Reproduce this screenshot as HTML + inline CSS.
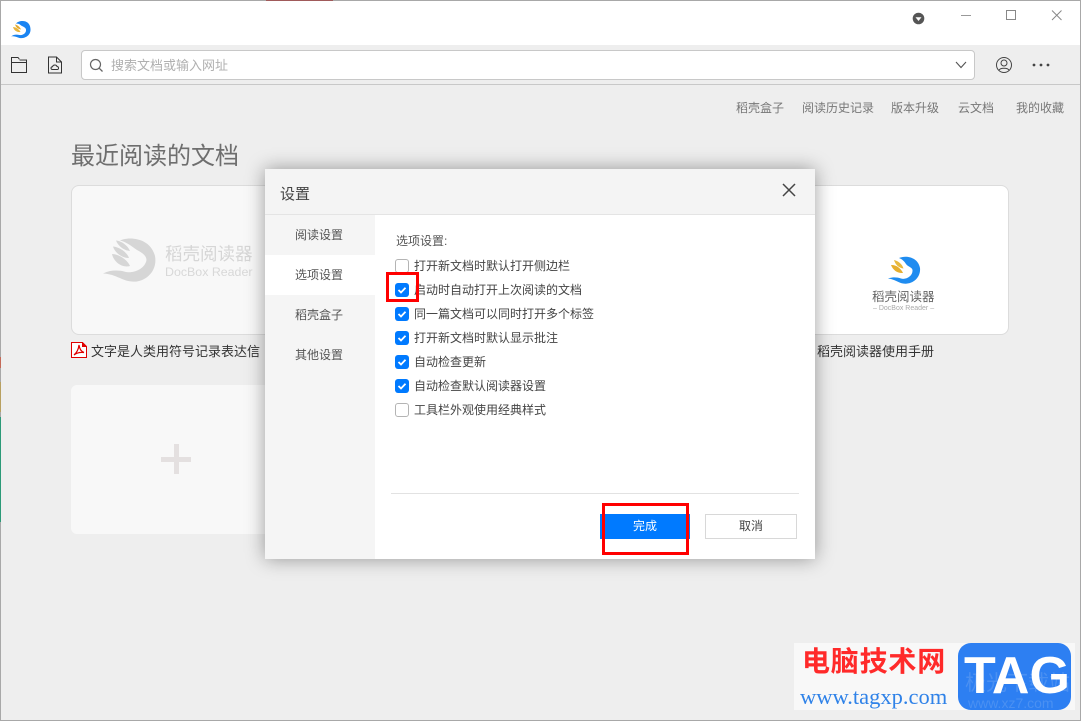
<!DOCTYPE html>
<html lang="zh">
<head>
<meta charset="utf-8">
<title>稻壳阅读器</title>
<style>
*{box-sizing:border-box;margin:0;padding:0}
html,body{width:1081px;height:721px;overflow:hidden;background:#eee}
body{position:relative;font-family:"Liberation Sans","Noto Sans CJK SC",sans-serif;color:#444}
.a{position:absolute}
.t{position:absolute;white-space:nowrap;line-height:16px}
.cb{position:absolute;left:395px;width:14px;height:14px;border-radius:3px;background:#007aff}
.cb svg{position:absolute;left:0;top:0}
.cb.off{background:#fff;border:1px solid #b4b4b4}
.opt{left:414px;font-size:12px;color:#444}
.nav{left:295px;font-size:12px;color:#555}
.top{top:100px;font-size:12px;color:#777}
</style>
</head>
<body>
<!-- window chrome -->
<div class="a" style="left:0;top:0;width:1081px;height:45px;background:#fff"></div>
<div class="a" style="left:0;top:45px;width:1081px;height:39px;background:#eee"></div>
<div class="a" style="left:0;top:84px;width:1081px;height:1px;background:#c8c8c8"></div>
<div class="a" style="left:0;top:0;width:1081px;height:1px;background:#a8a8a8"></div>
<div class="a" style="left:266px;top:0;width:67px;height:1px;background:#a05a5a"></div>
<div class="a" style="left:0;top:0;width:1px;height:721px;background:#a8a8a8"></div>
<div class="a" style="left:1080px;top:0;width:1px;height:721px;background:#a8a8a8"></div>
<div class="a" style="left:0;top:720px;width:1081px;height:1px;background:#a8a8a8"></div>
<div class="a" style="left:0;top:357px;width:1px;height:11px;background:#c46a58"></div>
<div class="a" style="left:0;top:382px;width:1px;height:30px;background:#b8a060"></div>
<div class="a" style="left:0;top:417px;width:1px;height:105px;background:#2c9a78"></div>

<!-- app logo -->
<svg class="a" style="left:10px;top:19px" width="22" height="22" viewBox="0 0 22 22">
<path d="M6 4.500C9 1 20 0 20.500 10C21 18 12 20.500 8 18.500C5.500 17.500 3 17 1 17.500C4 15 7 15.500 9.500 16C13 16.500 16.500 14 16 10.500C15.700 8 12 7.500 10.500 6C9.500 5 8 4.500 6 4.500Z" fill="#1a84f2"/>
<path d="M3 8C5.500 8 9 10 10.500 13C7 13.500 4 11.500 3 8Z" fill="#e8b53c"/>
<path d="M5 5.500C7.500 6 10 8 11 10.500C8 10 6 8.500 5 5.500Z" fill="#e2a92e"/>
</svg>

<!-- window controls -->
<svg class="a" style="left:910px;top:10px" width="171" height="20" viewBox="0 0 171 20">
<circle cx="8.500" cy="8.500" r="5.800" fill="#555"/>
<path d="M5.500 7.200H11.500L8.500 11Z" fill="#fff"/>
<path d="M51 5.500H61" stroke="#999" stroke-width="1" fill="none"/>
<rect x="96.500" y="0.500" width="9" height="9" stroke="#888" fill="none"/>
<path d="M142 0.500L151.500 10M151.500 0.500L142 10" stroke="#888" stroke-width="1" fill="none"/>
</svg>

<!-- toolbar icons -->
<svg class="a" style="left:10px;top:56px" width="20" height="18" viewBox="0 0 20 18">
<path d="M1.500 16.500V1.500H8L10 4H16.500V16.500Z" fill="none" stroke="#333" stroke-width="1"/>
<path d="M1.500 6.500H16.500" stroke="#333" stroke-width="1" fill="none"/>
<path d="M9 3.500H16.500" stroke="#999" stroke-width="1" fill="none"/>
</svg>
<svg class="a" style="left:47px;top:56px" width="18" height="18" viewBox="0 0 18 18">
<path d="M1.500 1H9.500L14.500 6V17H1.500Z" fill="none" stroke="#333" stroke-width="1"/>
<path d="M9.500 1V6H14.500" fill="none" stroke="#333" stroke-width="1"/>
<path d="M5.500 13.500C3.500 13.500 3.500 10.800 5.500 10.800C6 8.500 9.500 8.500 10 10.500C12 10.500 12 13.500 10.300 13.500Z" fill="none" stroke="#333" stroke-width="1"/>
</svg>

<!-- search -->
<div class="a" style="left:81px;top:50px;width:894px;height:30px;background:#fff;border:1px solid #c8c8c8;border-radius:4px"></div>
<svg class="a" style="left:89px;top:58px" width="16" height="16" viewBox="0 0 16 16">
<circle cx="6.500" cy="6.500" r="5" fill="none" stroke="#666" stroke-width="1.200"/>
<path d="M10.200 10.200L13.500 13.500" stroke="#666" stroke-width="1.300" fill="none"/>
</svg>
<div class="t" style="left:111px;top:58px;font-size:13px;color:#b0b0b0">搜索文档或输入网址</div>
<svg class="a" style="left:955px;top:60px" width="12" height="10" viewBox="0 0 12 10">
<path d="M1 2L6 7.500L11 2" fill="none" stroke="#555" stroke-width="1.100"/>
</svg>
<svg class="a" style="left:995px;top:56px" width="18" height="18" viewBox="0 0 18 18">
<circle cx="9" cy="9" r="7.500" fill="none" stroke="#444" stroke-width="1"/>
<circle cx="9" cy="7" r="3" fill="none" stroke="#444" stroke-width="1"/>
<path d="M3.800 14.500C5 11.500 13 11.500 14.200 14.500" fill="none" stroke="#444" stroke-width="1"/>
</svg>
<svg class="a" style="left:1031px;top:62px" width="20" height="6" viewBox="0 0 20 6">
<circle cx="3" cy="3" r="1.400" fill="#444"/><circle cx="10" cy="3" r="1.400" fill="#444"/><circle cx="17" cy="3" r="1.400" fill="#444"/>
</svg>

<!-- top links -->
<div class="t top" style="left:736px">稻壳盒子</div>
<div class="t top" style="left:802px">阅读历史记录</div>
<div class="t top" style="left:891px">版本升级</div>
<div class="t top" style="left:958px">云文档</div>
<div class="t top" style="left:1016px">我的收藏</div>

<div class="t" style="left:71px;top:142px;font-size:24px;line-height:30px;color:#6e6e6e">最近阅读的文档</div>

<!-- card 1 -->
<div class="a" style="left:71px;top:185px;width:300px;height:150px;background:#f8f8f8;border:1px solid #dcdcdc;border-radius:8px"></div>
<svg class="a" style="left:100px;top:236px" width="60" height="48" viewBox="100 236 60 48">
<path d="M120 240.500C128 236.500 150 237 155 256C158 272 144 283 132 281.500C122 281 116 274 103 273.500C110 270 118 270 124 271.500C132 274 143 270 146 262C148 257 143 253 137 250C132 247 127 242 120 240.500Z" fill="#d6d6d6"/>
<path d="M112 254C118 254 127 259 130 266C123 268 114 263 112 254Z" fill="#d6d6d6"/>
<path d="M113 246.500C119 247 127 252 129 258C122 258 115 253 113 246.500Z" fill="#d6d6d6"/>
<path d="M116 240.500C122 241 128 246 130 251C124 250.500 118 246 116 240.500Z" fill="#d6d6d6"/>
</svg>
<div class="t" style="left:165px;top:244px;font-size:17.500px;line-height:20px;color:#d6d6d6">稻壳阅读器</div>
<div class="t" style="left:165px;top:265px;font-size:12.400px;line-height:14px;color:#d8d8d8">DocBox Reader</div>

<!-- card 2 (behind dialog, right part) -->
<div class="a" style="left:709px;top:185px;width:300px;height:150px;background:#fff;border:1px solid #dcdcdc;border-radius:8px"></div>
<svg class="a" style="left:886px;top:255px" width="36" height="32" viewBox="0 0 36 32">
<path d="M13 3C20 0 32 2 34 13C35 23 26 30 17 28.500C12 27.500 8 24 2 23.500C6 22 11 22 15 23.500C20 25 27 21 26.500 15C26 12 22 12 20 9C18.500 6.500 16 4 13 3Z" fill="#1f8cf0"/>
<path d="M5 10C9.500 9.500 15 13 17 18C12 18.500 7 15.500 5 10Z" fill="#e6ae2e"/>
<path d="M8 5C12.500 6 16 9 17.500 13.500C13 13 9.500 10 8 5Z" fill="#e8b93e"/>
</svg>
<div class="t" style="left:872px;top:289px;font-size:12.500px;color:#666">稻壳阅读器</div>
<div class="t" style="left:873px;top:304px;font-size:7px;line-height:9px;color:#aaa">– DocBox Reader –</div>

<!-- captions -->
<svg class="a" style="left:71px;top:342px" width="17" height="16" viewBox="0 0 17 16">
<path d="M0.500 0.500H11.500L15.500 4.500V15.500H0.500Z" fill="#fff" stroke="#e00000" stroke-width="1"/>
<path d="M11.500 0.500V4.500H15.500" fill="#e00000" stroke="#e00000" stroke-width="1"/>
<path d="M8 3C7.500 7 6 10.500 3 13C6 10.500 9 10 13 10.500C10 9.500 8.500 6.500 8 3Z" fill="none" stroke="#e00000" stroke-width="1.200"/>
</svg>
<div class="t" style="left:91px;top:344px;font-size:13px;color:#333">文字是人类用符号记录表达信</div>
<div class="t" style="left:817px;top:344px;font-size:13px;color:#333">稻壳阅读器使用手册</div>

<!-- add card -->
<div class="a" style="left:71px;top:385px;width:300px;height:149px;background:#f8f8f8;border-radius:6px"></div>
<div class="a" style="left:161px;top:457px;width:30px;height:5px;background:#e4e0e0"></div>
<div class="a" style="left:174px;top:444px;width:5px;height:30px;background:#e4e0e0"></div>

<!-- dialog -->
<div class="a" style="left:265px;top:169px;width:550px;height:390px;background:#fff;box-shadow:0 0 18px rgba(0,0,0,.38)"></div>
<div class="a" style="left:265px;top:169px;width:550px;height:46px;background:#f4f4f4;border-bottom:1px solid #e4e4e4"></div>
<div class="t" style="left:280px;top:186px;font-size:15px;line-height:18px;color:#444">设置</div>
<svg class="a" style="left:782px;top:183px" width="14" height="14" viewBox="0 0 14 14">
<path d="M1 1L13 13M13 1L1 13" stroke="#444" stroke-width="1.500" fill="none"/>
</svg>
<div class="a" style="left:265px;top:215px;width:110px;height:344px;background:#f5f5f5"></div>
<div class="a" style="left:265px;top:255px;width:110px;height:40px;background:#fff"></div>
<div class="t nav" style="top:227px">阅读设置</div>
<div class="t nav" style="top:267px">选项设置</div>
<div class="t nav" style="top:307px">稻壳盒子</div>
<div class="t nav" style="top:347px">其他设置</div>

<div class="t" style="left:396px;top:233px;font-size:12px;color:#555">选项设置:</div>

<div class="cb off" style="top:259px"></div>
<div class="t opt" style="top:258px">打开新文档时默认打开侧边栏</div>
<div class="cb" style="top:283px"><svg width="14" height="14" viewBox="0 0 14 14"><path d="M3.500 7L6 9.500L10.500 4.800" fill="none" stroke="#fff" stroke-width="1.800"/></svg></div>
<div class="t opt" style="top:282px">启动时自动打开上次阅读的文档</div>
<div class="cb" style="top:307px"><svg width="14" height="14" viewBox="0 0 14 14"><path d="M3.500 7L6 9.500L10.500 4.800" fill="none" stroke="#fff" stroke-width="1.800"/></svg></div>
<div class="t opt" style="top:306px">同一篇文档可以同时打开多个标签</div>
<div class="cb" style="top:331px"><svg width="14" height="14" viewBox="0 0 14 14"><path d="M3.500 7L6 9.500L10.500 4.800" fill="none" stroke="#fff" stroke-width="1.800"/></svg></div>
<div class="t opt" style="top:330px">打开新文档时默认显示批注</div>
<div class="cb" style="top:355px"><svg width="14" height="14" viewBox="0 0 14 14"><path d="M3.500 7L6 9.500L10.500 4.800" fill="none" stroke="#fff" stroke-width="1.800"/></svg></div>
<div class="t opt" style="top:354px">自动检查更新</div>
<div class="cb" style="top:379px"><svg width="14" height="14" viewBox="0 0 14 14"><path d="M3.500 7L6 9.500L10.500 4.800" fill="none" stroke="#fff" stroke-width="1.800"/></svg></div>
<div class="t opt" style="top:378px">自动检查默认阅读器设置</div>
<div class="cb off" style="top:403px"></div>
<div class="t opt" style="top:402px">工具栏外观使用经典样式</div>

<div class="a" style="left:391px;top:493px;width:408px;height:1px;background:#e2e2e2"></div>
<div class="a" style="left:600px;top:514px;width:90px;height:25px;background:#007aff;color:#fff;font-size:12px;line-height:25px;text-align:center">完成</div>
<div class="a" style="left:705px;top:514px;width:92px;height:25px;background:#fff;border:1px solid #d8d8d8;color:#444;font-size:12px;line-height:23px;text-align:center">取消</div>

<!-- red annotations -->
<div class="a" style="left:386px;top:272px;width:33px;height:30px;border:3px solid #f00"></div>
<div class="a" style="left:602px;top:503px;width:87px;height:52px;border:3px solid #f00"></div>

<!-- watermark -->
<div class="a" style="left:794px;top:643px;width:281px;height:67px;background:#f8f8f8"></div>
<div class="t" style="left:802px;top:647px;font-size:28px;line-height:30px;font-weight:bold;letter-spacing:.8px;color:#ff2a2a">电脑技术网</div>
<div class="t" style="left:800px;top:686px;font-family:'Liberation Serif',serif;font-size:22.500px;line-height:22px;color:#2f82e8">www.tagxp.com</div>
<div class="a" style="left:958px;top:643px;width:113px;height:67px;background:#2d7ff2;border-radius:13px"></div>
<div class="t" style="left:965px;top:672px;font-size:21px;line-height:24px;color:#4a90f2">极光下载站</div>
<div class="t" style="left:968px;top:697px;font-size:14px;line-height:13px;color:#4a90f2">www.xz7.com</div>
<div class="t" style="left:964px;top:647px;font-size:52px;line-height:58px;font-weight:bold;color:#fff">TAG</div>
</body>
</html>
